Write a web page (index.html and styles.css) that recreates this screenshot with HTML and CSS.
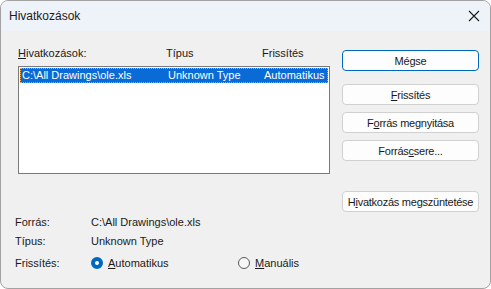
FILE: index.html
```html
<!doctype html>
<html lang="hu">
  <head>
    <meta charset="UTF-8" />
    <title>Hivatkozások</title>
    <link rel="stylesheet" href="styles.css">
  </head>
  <body>
    <div class="window">
      <div class="titlebar">
        <span class="title">Hivatkozások</span>
        <svg class="close" width="12" height="12" viewBox="0 0 12 12">
          <path d="M1 1 L11 11 M11 1 L1 11" stroke="#1a1a1a" stroke-width="1.1" fill="none" />
        </svg>
      </div>

      <div class="dialog">
        <div class="top">
          <div class="links">
            <div class="cols head">
              <span><u>H</u>ivatkozások:</span>
              <span>Típus</span>
              <span>Frissítés</span>
            </div>
            <div class="listbox">
              <div class="cols row selected">
                <span>C:\All Drawings\ole.xls</span>
                <span>Unknown Type</span>
                <span>Automatikus</span>
              </div>
            </div>
          </div>

          <div class="actions">
            <button class="btn default">Mégse</button>
            <button class="btn first"><u>F</u>rissítés</button>
            <button class="btn">F<u>o</u>rrás megnyitása</button>
            <button class="btn">Forrás<u>c</u>sere...</button>
          </div>
        </div>

        <div class="unlink-row">
          <button class="btn">H<u>i</u>vatkozás megszüntetése</button>
        </div>

        <div class="info">
          <span class="label">Forrás:</span>
          <span>C:\All Drawings\ole.xls</span>
          <span class="label">Típus:</span>
          <span>Unknown Type</span>
          <span class="label update">Frissítés:</span>
          <div class="radios update">
            <label class="radio on"><span class="dot"></span><span><u>A</u>utomatikus</span></label>
            <label class="radio"><span class="dot"></span><span><u>M</u>anuális</span></label>
          </div>
        </div>
      </div>
    </div>
  </body>
</html>
```

FILE: styles.css
```css
body {
  margin: 0;
  font-family: "Liberation Sans", Arial, sans-serif;
  font-size: 11px;
  color: #1a1a1a;
  background: #ffffff;
}

.window {
  width: 491px;
  height: 289px;
  box-sizing: border-box;
  border: 1px solid #a2a2a2;
  border-radius: 8px;
  overflow: hidden;
  background: #f0f0f0;
}

.titlebar {
  height: 30px;
  display: flex;
  align-items: center;
  justify-content: space-between;
  padding: 0 10px 0 8px;
  background: #eef3fa;
}

.title {
  font-size: 12px;
  color: #1a1a1a;
}

.close {
  display: block;
}

.dialog {
  padding: 15px 11px 0 17px;
}

.top {
  display: flex;
  gap: 12px;
  align-items: flex-start;
}

.links {
  width: 312px;
}

.cols {
  display: grid;
  grid-template-columns: 148px 96px 1fr;
  white-space: nowrap;
}

.head {
  height: 14px;
  line-height: 14px;
  margin-bottom: 6px;
}

.listbox {
  height: 108px;
  box-sizing: border-box;
  border: 1px solid #7a7a7a;
  background: #ffffff;
  padding: 1px;
}

.row {
  grid-template-columns: 146px 96px 1fr;
  height: 15px;
  line-height: 15px;
  padding-left: 2px;
}

.selected {
  background: #0a6ad6;
  color: #ffffff;
  outline: 1px dotted #f0a040;
  outline-offset: -1px;
}

.actions {
  width: 137px;
  padding-top: 4px;
  display: flex;
  flex-direction: column;
  gap: 7px;
}

.btn {
  height: 21px;
  padding: 0;
  box-sizing: border-box;
  border: 1px solid #d0d0d0;
  border-radius: 4px;
  background: #fdfdfd;
  font-family: inherit;
  font-size: 11px;
  letter-spacing: -0.25px;
  white-space: nowrap;
  color: #1a1a1a;
}

.default {
  border-color: #0067c0;
  box-shadow: inset 0 0 0 1px #ffffff;
}

.first {
  margin-top: 6px;
}

.unlink-row {
  display: flex;
  justify-content: flex-end;
  margin-top: 17px;
}

.unlink-row .btn {
  width: 137px;
}

.info {
  display: grid;
  grid-template-columns: 76px 1fr;
  grid-auto-rows: 19px;
  align-items: center;
  margin-left: -3px;
}

.update {
  margin-top: 6px;
}

.radios {
  display: flex;
}

.radio {
  display: flex;
  align-items: center;
  gap: 5px;
  width: 147px;
}

.dot {
  width: 10px;
  height: 10px;
  border-radius: 50%;
  border: 1px solid #5a5a5a;
  background: #f7f7f7;
}

.radio.on .dot {
  width: 4px;
  height: 4px;
  border: 4px solid #0067c0;
  background: #ffffff;
}
```
